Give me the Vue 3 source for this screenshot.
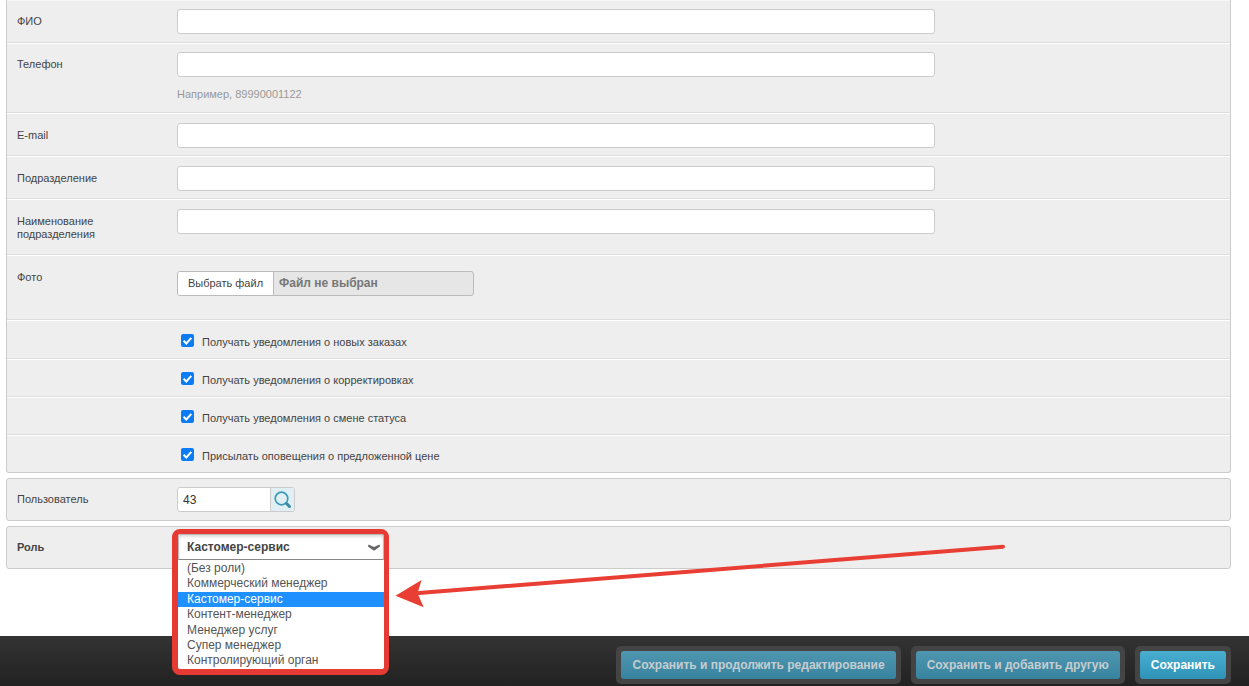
<script setup>
const textRowsA = [
  { label: 'ФИО', cls: 'h44' },
  { label: 'Телефон', cls: 'h70', hint: 'Например, 89990001122' },
  { label: 'E-mail', cls: 'h43' },
  { label: 'Подразделение', cls: 'h43' },
  { label: 'Наименование подразделения', cls: 'h56' }
]
const checks = [
  'Получать уведомления о новых заказах',
  'Получать уведомления о корректировках',
  'Получать уведомления о смене статуса',
  'Присылать оповещения о предложенной цене'
]
const roles = ['(Без роли)', 'Коммерческий менеджер', 'Кастомер-сервис', 'Контент-менеджер', 'Менеджер услуг', 'Супер менеджер', 'Контролирующий орган']
</script>

<template>
  <div class="page">
    <main class="content">
      <section class="card first">
        <div v-for="r in textRowsA" :key="r.label" class="row" :class="r.cls">
          <div class="label">{{ r.label }}</div>
          <div class="field">
            <div class="input"></div>
            <div v-if="r.hint" class="hint">{{ r.hint }}</div>
          </div>
        </div>
        <div class="row file-row">
          <div class="label">Фото</div>
          <div class="field">
            <div class="file">
              <span class="file-btn">Выбрать файл</span>
              <span class="file-name">Файл не выбран</span>
            </div>
          </div>
        </div>
        <div v-for="c in checks" :key="c" class="row check-row">
          <span class="check">
            <svg width="13" height="13" viewBox="0 0 13 13"><path d="M2.6 6.800l2.700 2.700 5-5.600" fill="none" stroke="#fff" stroke-width="2"/></svg>
          </span>
          <span class="check-label">{{ c }}</span>
        </div>
      </section>

      <section class="card user">
        <div class="label">Пользователь</div>
        <div class="lookup">
          <span class="lookup-val">43</span>
          <span class="lookup-btn">
            <svg width="18" height="18" viewBox="0 0 18 18">
              <circle cx="7.500" cy="7.500" r="6.300" fill="none" stroke="#3a9bb8" stroke-width="1.700"/>
              <path d="M12.500 12.500l3 3" stroke="#3a8ca5" stroke-width="3" stroke-linecap="round"/>
            </svg>
          </span>
        </div>
      </section>

      <section class="card role">
        <div class="label strong">Роль</div>
      </section>
    </main>

    <footer class="footer">
      <div class="btn-wrap"><button class="btn muted">Сохранить и продолжить редактирование</button></div>
      <div class="btn-wrap"><button class="btn muted">Сохранить и добавить другую</button></div>
      <div class="btn-wrap"><button class="btn">Сохранить</button></div>
    </footer>

    <div class="select-box">
      <div class="select">
        <span>Кастомер-сервис</span>
        <svg width="12" height="7" viewBox="0 0 12 7"><path d="M0.500 0.500L6 3L11.500 0.500L12 2.500L6.500 6.500L5.500 6.500L0 2.500z" fill="#666"/></svg>
      </div>
      <ul class="list">
        <li v-for="o in roles" :key="o" :class="{ active: o === 'Кастомер-сервис' }">{{ o }}</li>
      </ul>
    </div>

    <svg class="arrow" width="620" height="70" viewBox="0 0 620 70">
      <path d="M610 4.700L26 51" stroke="#e83e33" stroke-width="4" stroke-linecap="round" fill="none"/>
      <path d="M2.500 53.700L28.600 38L24.500 51.300L30.700 65.300z" fill="#e83e33"/>
    </svg>
  </div>
</template>

<style>
html, body { margin: 0; background: #fff; overflow: hidden; }
</style>

<style scoped>
.page {
  position: relative;
  width: 1249px;
  height: 686px;
  overflow: hidden;
  font-family: "Liberation Sans", Arial, sans-serif;
  font-size: 11px;
  color: #444;
  display: flex;
  flex-direction: column;
}
.content {
  height: 636px;
  padding: 0 18px 0 6px;
  box-sizing: border-box;
}
.card {
  background: #eee;
  border: 1px solid #ccc;
  border-radius: 3px;
  box-sizing: border-box;
}
.card.first {
  border-top: 0;
  border-top-left-radius: 0;
  border-top-right-radius: 0;
  height: 473px;
}
.row {
  display: flex;
  box-sizing: border-box;
  border-bottom: 1px solid #fff;
  box-shadow: inset 0 -1px 0 #ddd;
  padding-top: 9px;
}
.row:first-child { border-top: 1px solid #f8f8f8; padding-top: 8px; }
.h44 { height: 44px; }
.h43 { height: 43px; }
.h70 { height: 70px; padding-top: 8px; }
.h56 { height: 56px; }
.label {
  width: 170px;
  padding-left: 10px;
  box-sizing: border-box;
  flex: none;
  line-height: 13px;
  padding-top: 6px;
  color: #444;
}
.row .label { width: 170px; padding-right: 40px; }
.input {
  width: 758px;
  height: 25px;
  box-sizing: border-box;
  background: #fff;
  border: 1px solid #ccc;
  border-radius: 3px;
}
.hint {
  color: #999;
  font-size: 11px;
  margin-top: 11px;
  line-height: 13px;
  font-weight: normal;
}
.file-row { height: 65px; padding-top: 15px; }
.file-row .label { padding-top: 0; }
.file {
  display: flex;
  width: 297px;
  height: 25px;
  box-sizing: border-box;
  border: 1px solid #bbb;
  border-radius: 3px;
  background: #e6e6e6;
  overflow: hidden;
  align-items: stretch;
}
.file-btn {
  width: 95px;
  background: #fff;
  border-right: 1px solid #bbb;
  text-align: center;
  line-height: 23px;
  color: #444;
}
.file-name {
  padding-left: 5px;
  font-size: 12px;
  font-weight: bold;
  color: #777;
  line-height: 23px;
}
.check-row {
  height: 38px;
  padding: 12px 0 0 174px;
  align-items: flex-start;
}
.file-row + .check-row { height: 39px; padding-top: 13px; }
.check-row:last-child { height: 36px; border-bottom: 0; box-shadow: none; }
.check {
  width: 13px;
  height: 13px;
  background: #0b7cf3;
  border-radius: 2px;
  display: block;
  flex: none;
}
.check svg { display: block; }
.check-label {
  margin-left: 8px;
  line-height: 13px;
  margin-top: 2px;
}
.card.user {
  margin-top: 5px;
  height: 43px;
  display: flex;
  padding-top: 8px;
}
.card.user .label { padding-top: 6px; }
.lookup {
  display: flex;
  width: 118px;
  height: 25px;
  box-sizing: border-box;
  border: 1px solid #ccc;
  border-radius: 3px;
  background: #fff;
  overflow: hidden;
}
.lookup-val {
  width: 92px;
  padding-left: 5px;
  box-sizing: border-box;
  font-size: 12px;
  line-height: 24px;
  color: #333;
}
.lookup-btn {
  flex: 1;
  background: #e1eff4;
  border-left: 1px solid #ccc;
  display: flex;
  align-items: center;
  justify-content: center;
}
.card.role {
  margin-top: 5px;
  height: 43px;
  padding-top: 8px;
}
.strong { font-weight: bold; }
.footer {
  height: 50px;
  background: linear-gradient(#333, #222);
  display: flex;
  justify-content: flex-end;
  gap: 10px;
  padding: 10px 18px 0 0;
  box-sizing: border-box;
}
.btn-wrap {
  height: 38px;
  padding: 5px;
  box-sizing: border-box;
  background: #444;
  border-radius: 5px;
}
.btn {
  display: block;
  height: 28px;
  padding: 0 11px;
  border: 0;
  border-radius: 3px;
  background: linear-gradient(#4aaed1, #2f93b8);
  color: #fff;
  font: bold 12px "Liberation Sans", Arial, sans-serif;
  white-space: nowrap;
}
.btn.muted {
  background: linear-gradient(#4f96b0, #37839f);
  color: #c5cdd0;
}
.select-box {
  position: absolute;
  left: 172px;
  top: 529px;
  width: 217px;
  height: 146px;
  box-sizing: border-box;
  border: solid #e63b32;
  border-width: 5px 5px 6px 6px;
  border-radius: 8px;
  background: #fff;
}
.select {
  height: 26px;
  box-sizing: border-box;
  border: 1px solid #bbb;
  border-bottom-color: #888;
  border-radius: 3px 3px 0 0;
  display: flex;
  justify-content: space-between;
  align-items: center;
  padding: 0 3px 0 8px;
  font-size: 12px;
  font-weight: bold;
  color: #444;
  box-shadow: inset 0 2px 3px #ddd;
}
.list {
  list-style: none;
  margin: 0;
  padding: 1px 0 0;
  font-size: 12px;
  color: #555;
}
.list li {
  height: 15.400px;
  line-height: 15px;
  padding-left: 9px;
}
.list li.active { background: #1e90ff; color: #fff; }
.arrow {
  position: absolute;
  left: 393px;
  top: 542px;
}
</style>
